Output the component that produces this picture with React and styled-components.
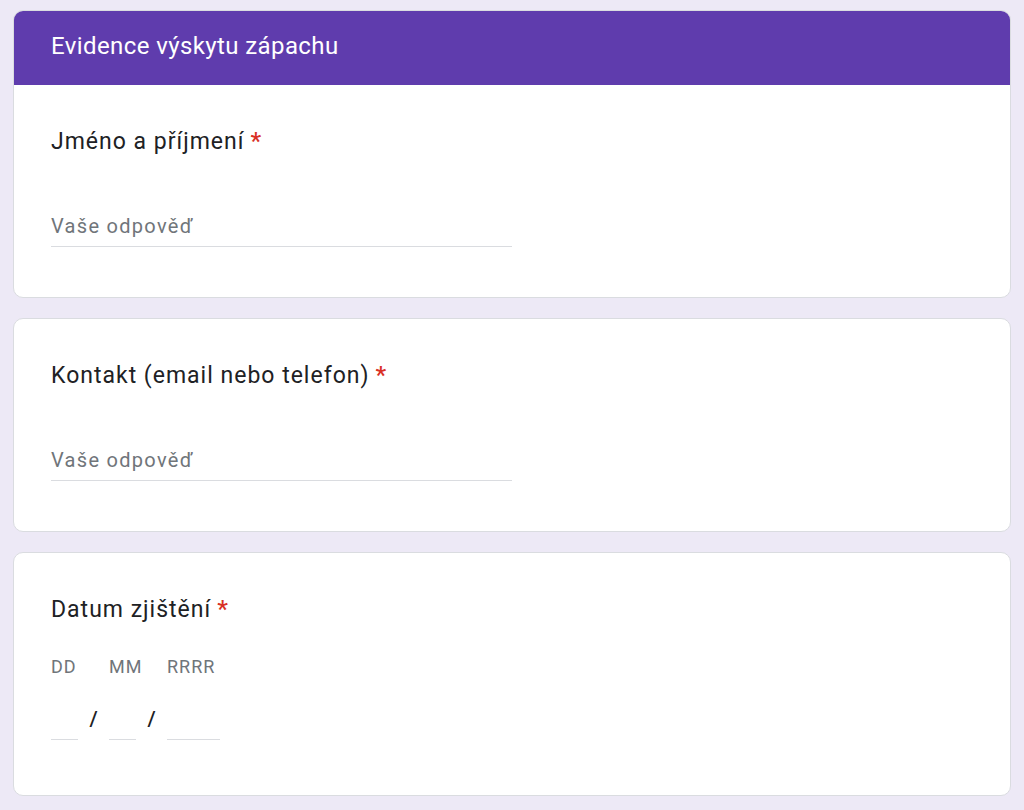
import React from 'react'
import styled, { createGlobalStyle } from 'styled-components'

const Global = createGlobalStyle`
  body {
    margin: 0;
    background: #ede9f6;
    font-family: Roboto, "Liberation Sans", sans-serif;
  }
`

const Page = styled.div`
  display: flex;
  flex-direction: column;
  gap: 20px;
  padding: 10px 13px 20px 13px;
`

const Card = styled.section`
  background: #fff;
  border: 1px solid #dadce0;
  border-radius: 10px;
  overflow: hidden;
`

const Header = styled.header`
  height: 75px;
  margin: -1px -1px 0;
  padding: 0 38px 3px;
  display: flex;
  align-items: center;
  background: #5f3cad;
  color: #fff;
  font-size: 24px;
  letter-spacing: 0.4px;
  box-sizing: border-box;
`

const Body = styled.div`
  padding: 42px 37px ${({ $bottom }) => $bottom || 50}px;
`

const Title = styled.h2`
  margin: 0;
  height: 30px;
  font-size: 23px;
  font-weight: 400;
  line-height: 30px;
  letter-spacing: 1px;
  color: #202124;
`

const Star = styled.span`
  color: #d93025;
  margin-left: 6px;
  font-size: 24px;
  font-weight: 500;
  line-height: 0;
`

const Answer = styled.div`
  margin-top: 49px;
  width: 461px;
  height: 40px;
  display: flex;
  align-items: center;
  border-bottom: 1px solid #dadce0;
  color: #70757a;
  font-size: 20px;
  letter-spacing: 1.3px;
`

const DateGrid = styled.div`
  margin-top: 30px;
  display: grid;
  grid-template-columns: 27px 31px 27px 31px 53px;
  grid-template-rows: 22px 63px;
  align-items: end;
`

const DateLabel = styled.span`
  grid-row: 1;
  grid-column: ${({ $col }) => $col};
  color: #70757a;
  font-size: 18px;
  letter-spacing: 1px;
  white-space: nowrap;
  align-self: center;
`

const DateField = styled.span`
  grid-row: 2;
  height: 0;
  border-bottom: 1px solid #dadce0;
`

const Slash = styled.span`
  grid-row: 2;
  text-align: center;
  color: #202124;
  font-size: 21px;
  font-weight: 500;
  line-height: 20px;
  margin-bottom: 11px;
`

const TextQuestion = ({ title }) => (
  <Body>
    <Title>{title}<Star>*</Star></Title>
    <Answer>Vaše odpověď</Answer>
  </Body>
)

export default function App() {
  return (
    <Page>
      <Global />
      <Card>
        <Header>Evidence výskytu zápachu</Header>
        <TextQuestion title="Jméno a příjmení" />
      </Card>
      <Card>
        <TextQuestion title="Kontakt (email nebo telefon)" />
      </Card>
      <Card>
        <Body $bottom={55}>
          <Title>Datum zjištění<Star>*</Star></Title>
          <DateGrid>
            <DateLabel $col={1}>DD</DateLabel>
            <DateLabel $col={3}>MM</DateLabel>
            <DateLabel $col={5}>RRRR</DateLabel>
            <DateField />
            <Slash>/</Slash>
            <DateField />
            <Slash>/</Slash>
            <DateField />
          </DateGrid>
        </Body>
      </Card>
    </Page>
  )
}
